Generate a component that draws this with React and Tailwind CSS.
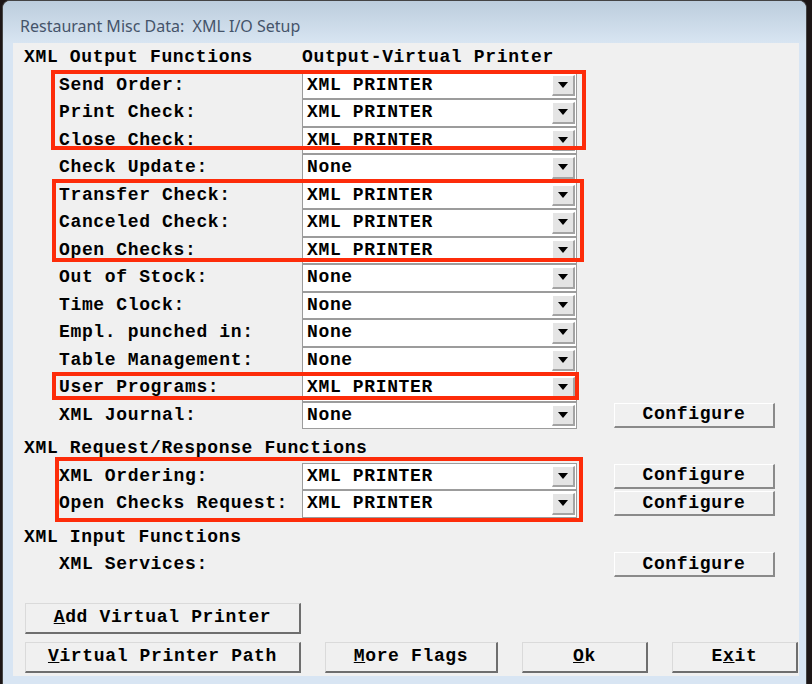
import React from 'react';

const outputRows = [
  { label: 'Send Order:', value: 'XML PRINTER' },
  { label: 'Print Check:', value: 'XML PRINTER' },
  { label: 'Close Check:', value: 'XML PRINTER' },
  { label: 'Check Update:', value: 'None' },
  { label: 'Transfer Check:', value: 'XML PRINTER' },
  { label: 'Canceled Check:', value: 'XML PRINTER' },
  { label: 'Open Checks:', value: 'XML PRINTER' },
  { label: 'Out of Stock:', value: 'None' },
  { label: 'Time Clock:', value: 'None' },
  { label: 'Empl. punched in:', value: 'None' },
  { label: 'Table Management:', value: 'None' },
  { label: 'User Programs:', value: 'XML PRINTER' },
  { label: 'XML Journal:', value: 'None', configure: true },
];

const requestRows = [
  { label: 'XML Ordering:', value: 'XML PRINTER', configure: true },
  { label: 'Open Checks Request:', value: 'XML PRINTER', configure: true },
];

const Combo = ({ value }) => (
  <div className="flex h-full w-[275px] shrink-0 items-center border border-[#9c9c9c] bg-white">
    <span className="flex-1 pl-[4px] whitespace-pre">{value}</span>
    <div className="mr-[1px] flex h-[calc(100%-4px)] w-[23px] items-center justify-center border-t border-l border-white border-r-2 border-b-2 border-r-[#a3a3a3] border-b-[#a3a3a3] bg-[#e4e4e4]">
      <svg width="10" height="6" viewBox="0 0 10 6">
        <path d="M0 0h10L5 6z" fill="#000" />
      </svg>
    </div>
  </div>
);

const ConfigureButton = () => (
  <button className="ml-[37px] flex h-[25px] w-[161px] shrink-0 items-center justify-center border-t border-l border-white border-r-2 border-b-2 border-r-[#8a8a8a] border-b-[#8a8a8a] bg-[#f0f0f0]">
    Configure
  </button>
);

const Row = ({ label, value, configure }) => (
  <div className="flex h-[27.5px] items-center">
    <div className="w-[278px] shrink-0 pl-[35px] whitespace-pre">{label}</div>
    {value ? <Combo value={value} /> : <div className="w-[275px] shrink-0" />}
    {configure && <ConfigureButton />}
  </div>
);

const SectionHeader = ({ children }) => (
  <div className="flex h-[27.5px] items-center whitespace-pre">{children}</div>
);

const DialogButton = ({ width, children }) => (
  <button
    className={`flex h-[31px] ${width} shrink-0 items-center justify-center border-t border-l border-[#dadada] border-r-2 border-b-2 border-r-[#6e6e6e] border-b-[#6e6e6e] bg-[#f0f0f0]`}
  >
    {children}
  </button>
);

// red outlines marking the configured printers
const Marker = ({ className }) => (
  <div className={`pointer-events-none absolute border-4 border-[#fd2c0a] ${className}`} />
);

export default function App() {
  return (
    <div className="h-[684px] w-[812px] overflow-hidden bg-[#1d1616]">
      <div className="ml-[2px] flex h-[684px] w-[805px] flex-col overflow-hidden rounded-t-[8px] border border-b-0 border-[#444] bg-[#d8e5f3]">
        <div className="h-[42px] shrink-0 bg-gradient-to-b from-[#bccddd] to-[#d8e5f2] pl-[17px] pt-[14px] font-['Noto_Sans',sans-serif] text-[16px] leading-[22px] text-[#45546a] whitespace-pre">
          Restaurant Misc Data:  XML I/O Setup
        </div>
        <div className="flex flex-1">
          <div className="relative ml-[10px] h-[633px] w-[786px] bg-[#f0f0f0] px-[11px] font-['Liberation_Mono',monospace] text-[18px] font-bold tracking-[0.65px] text-black">
            <div className="flex h-[28.5px] items-center whitespace-pre">
              <span className="w-[278px]">XML Output Functions</span>
              <span>Output-Virtual Printer</span>
            </div>
            {outputRows.map((r) => (
              <Row key={r.label} {...r} />
            ))}

            <div className="mt-[6px]">
              <SectionHeader>XML Request/Response Functions</SectionHeader>
              {requestRows.map((r) => (
                <Row key={r.label} {...r} />
              ))}
            </div>

            <div className="mt-[6px]">
              <SectionHeader>XML Input Functions</SectionHeader>
              <Row label="XML Services:" configure />
            </div>

            <div className="ml-[1px] mt-[24px] flex flex-col gap-[8px]">
              <DialogButton width="w-[276px]">
                <span><span className="underline">A</span>dd Virtual Printer</span>
              </DialogButton>
              <div className="flex gap-[24px]">
                <DialogButton width="w-[276px]">
                  <span><span className="underline">V</span>irtual Printer Path</span>
                </DialogButton>
                <DialogButton width="w-[173px]">
                  <span><span className="underline">M</span>ore Flags</span>
                </DialogButton>
                <DialogButton width="w-[126px]">
                  <span><span className="underline">O</span>k</span>
                </DialogButton>
                <DialogButton width="w-[126px]">
                  <span>E<span className="underline">x</span>it</span>
                </DialogButton>
              </div>
            </div>

            <Marker className="left-[38px] top-[27px] h-[80px] w-[535px]" />
            <Marker className="left-[39px] top-[136px] h-[83px] w-[532px]" />
            <Marker className="left-[39px] top-[329px] h-[28px] w-[527px]" />
            <Marker className="left-[42px] top-[414px] h-[65px] w-[528px]" />
          </div>
        </div>
      </div>
    </div>
  );
}
